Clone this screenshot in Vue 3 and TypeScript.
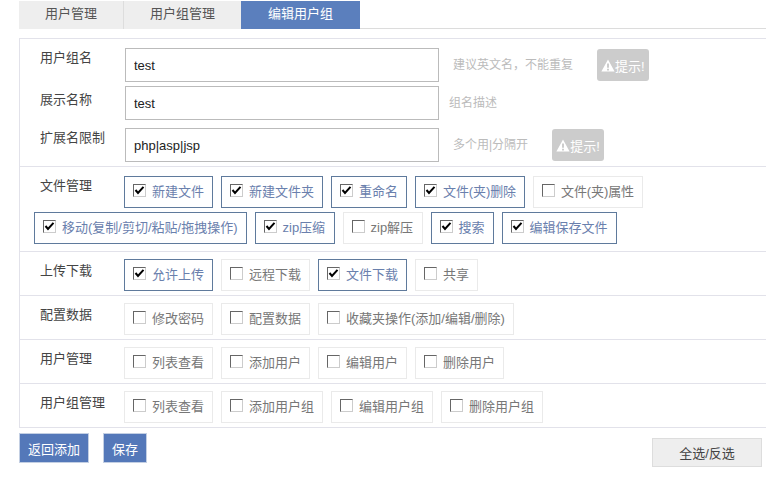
<script setup lang="ts">
interface Perm { text: string; on: boolean }
interface Section { label: string; first?: boolean; items: Perm[] }

const p = (text: string, on = false): Perm => ({ text, on })

const tabs = [
  { text: '用户管理', cls: 't1' },
  { text: '用户组管理', cls: 't2' },
  { text: '编辑用户组', cls: 't3' }
]

const sections: Section[] = [
  {
    label: '文件管理',
    first: true,
    items: [
      p('新建文件', true), p('新建文件夹', true), p('重命名', true), p('文件(夹)删除', true), p('文件(夹)属性'),
      p('移动(复制/剪切/粘贴/拖拽操作)', true), p('zip压缩', true), p('zip解压'), p('搜索', true), p('编辑保存文件', true)
    ]
  },
  { label: '上传下载', items: [p('允许上传', true), p('远程下载'), p('文件下载', true), p('共享')] },
  { label: '配置数据', items: [p('修改密码'), p('配置数据'), p('收藏夹操作(添加/编辑/删除)')] },
  { label: '用户管理', items: [p('列表查看'), p('添加用户'), p('编辑用户'), p('删除用户')] },
  { label: '用户组管理', items: [p('列表查看'), p('添加用户组'), p('编辑用户组'), p('删除用户组')] }
]
</script>

<template>
  <div class="page">
    <div class="tabs">
      <div v-for="t in tabs" :key="t.text" class="tab" :class="t.cls">{{ t.text }}</div>
    </div>

    <div class="panel">
      <div class="basic">
        <div class="row r1">
          <label class="lab">用户组名</label>
          <input class="field" value="test" />
          <span class="hint h1">建议英文名，不能重复</span>
          <span class="tip">
            <svg width="14" height="13" viewBox="0 0 14 13"><path fill="#fff" fill-rule="evenodd" d="M7 .5 13.6 12.5H.4ZM6 4.5V8.8H8V4.5ZM6 9.8V11.5H8V9.8Z" /></svg>提示!
          </span>
        </div>
        <div class="row r2">
          <label class="lab">展示名称</label>
          <input class="field" value="test" />
          <span class="hint h2">组名描述</span>
        </div>
        <div class="row r3">
          <label class="lab">扩展名限制</label>
          <input class="field" value="php|asp|jsp" />
          <span class="hint h1">多个用|分隔开</span>
          <span class="tip">
            <svg width="14" height="13" viewBox="0 0 14 13"><path fill="#fff" fill-rule="evenodd" d="M7 .5 13.6 12.5H.4ZM6 4.5V8.8H8V4.5ZM6 9.8V11.5H8V9.8Z" /></svg>提示!
          </span>
        </div>
      </div>

      <div v-for="s in sections" :key="s.label" class="sec" :class="{ first: s.first }">
        <div class="sec-label">{{ s.label }}</div>
        <div
          v-for="it in s.items"
          :key="it.text"
          class="perm"
          :class="{ on: it.on, zip: it.text.startsWith('zip'), tight: it.text.startsWith('文件(') }"
        >
          <span class="box">
            <svg v-if="it.on" width="11" height="11" viewBox="0 0 11 11"><path fill="none" stroke="#000" stroke-width="2" d="M1.5 5 4 8 9.5 1.8" /></svg>
          </span>
          <span class="ptext">{{ it.text }}</span>
        </div>
      </div>
    </div>

    <div class="foot">
      <div class="foot-left">
        <button class="primary">返回添加</button>
        <button class="primary">保存</button>
      </div>
      <button class="invert">全选/反选</button>
    </div>
  </div>
</template>

<style>
html, body { margin: 0; background: #fff; overflow: hidden; }
</style>

<style scoped>
.page {
  box-sizing: border-box;
  width: 766px;
  height: 481px;
  padding: 1px 0 0 19px;
  font-family: "Liberation Sans", "Noto Sans CJK SC", sans-serif;
  font-size: 13px;
  color: #444;
}
.tabs {
  display: flex;
  height: 27px;
  border-bottom: 1px solid #dcdcdc;
}
.tab {
  box-sizing: border-box;
  height: 28px;
  line-height: 26px;
  background: #eee;
  text-align: center;
  color: #555;
}
.t1 { width: 105px; border-right: 1px solid #ddd; }
.t2 { width: 117px; }
.t3 { width: 119px; background: #5b7fbd; color: #fff; }

.panel {
  margin-top: 9px;
  border: 1px solid #e2e2ea;
  border-right: 0;
}
.basic {
  padding: 9px 0 4px 20px;
  display: flex;
  flex-direction: column;
}
.row { display: flex; align-items: flex-start; height: 34px; }
.r2 { margin-top: 4px; }
.r3 { margin-top: 8px; }
.lab {
  width: 85px;
  line-height: 20px;
  color: #444;
}
.r2 .lab { margin-top: 4px; }
.field {
  box-sizing: border-box;
  width: 314px;
  height: 34px;
  padding: 1px 8px 0;
  border: 1px solid #bbb;
  outline: 0;
  background: #fff;
  font: 13px "Liberation Sans", "Noto Sans CJK SC", sans-serif;
  color: #222;
}
.hint {
  font-size: 12px;
  line-height: 34px;
  color: #bbb;
}
.h1 { margin-left: 14px; }
.h2 { margin-left: 10px; }
.tip {
  display: flex;
  align-items: center;
  box-sizing: border-box;
  width: 52px;
  height: 32px;
  margin: 1px 0 0 24px;
  padding-left: 4px;
  border-radius: 3px;
  background: #ccc;
  color: #fff;
  font-size: 13px;
  white-space: nowrap;
}
.tip svg { flex: none; }

.sec {
  display: flex;
  flex-wrap: wrap;
  align-items: flex-start;
  gap: 4px 8px;
  padding: 7px 0 4px 14px;
  border-top: 1px solid #e2e2ea;
}
.sec.first { padding: 9px 0 7px 14px; }
.sec-label {
  box-sizing: border-box;
  width: 82px;
  margin-top: 2px;
  padding-left: 6px;
  line-height: 20px;
  color: #444;
}
.sec.first .sec-label { margin-top: 0; }
.perm {
  display: flex;
  box-sizing: border-box;
  height: 32px;
  padding: 0 8px;
  border: 1px solid #eaeaea;
  color: #777;
}
.perm.zip { min-width: 80px; }
.perm.tight .ptext { letter-spacing: -0.1px; }
.perm.on {
  border-color: #5f7a9c;
  color: #6a80ad;
}
.box {
  box-sizing: border-box;
  display: flex;
  align-items: center;
  justify-content: center;
  flex: none;
  width: 13px;
  height: 13px;
  margin: 7px 6px 0 0;
  border: 1px solid;
  border-color: #666 #ccc #ccc #666;
  background: #fff;
}
.ptext {
  line-height: 30px;
  white-space: nowrap;
}

.foot {
  display: flex;
  justify-content: space-between;
  align-items: flex-start;
  padding: 5px 4px 0 0;
}
.foot-left { display: flex; gap: 14px; }
button {
  box-sizing: border-box;
  font: 13px "Liberation Sans", "Noto Sans CJK SC", sans-serif;
  cursor: pointer;
  padding: 0;
}
.primary {
  height: 30px;
  padding: 0 8px;
  border: 1px solid #c3cfe3;
  background: #5478b9;
  color: #fff;
}
.invert {
  width: 110px;
  height: 29px;
  margin-top: 5px;
  border: 1px solid #ddd;
  background: #eee;
  color: #444;
}
</style>
